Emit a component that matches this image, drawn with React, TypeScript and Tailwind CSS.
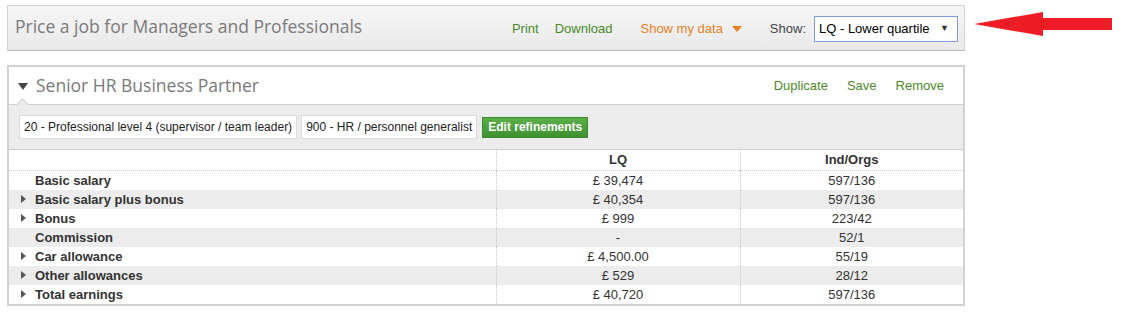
import React from 'react';

interface Row {
    label: string;
    value: string;
    counts: string;
    expandable: boolean;
}

const rows: Row[] = [
    { label: 'Basic salary', value: '£ 39,474', counts: '597/136', expandable: false },
    { label: 'Basic salary plus bonus', value: '£ 40,354', counts: '597/136', expandable: true },
    { label: 'Bonus', value: '£ 999', counts: '223/42', expandable: true },
    { label: 'Commission', value: '-', counts: '52/1', expandable: false },
    { label: 'Car allowance', value: '£ 4,500.00', counts: '55/19', expandable: true },
    { label: 'Other allowances', value: '£ 529', counts: '28/12', expandable: true },
    { label: 'Total earnings', value: '£ 40,720', counts: '597/136', expandable: true },
];

const Arrow: React.FC = () => (
    <svg width="140" height="26" viewBox="0 0 140 26" className="ml-[9px] mt-[12px]">
        <polygon points="0,12 69,0 69,6 138,6 138,18 69,18 69,24" fill="#ee1c25" />
    </svg>
);

const App: React.FC = () => {
    return (
        <div className="w-[1129px] h-[312px] bg-white font-['Liberation_Sans',Arial,sans-serif] text-[13px] text-[#333]">
            {/* Page header bar */}
            <div className="flex items-start">
                <div className="ml-[7px] mt-[5px] w-[958px] h-[46px] border border-[#d4d4d4] border-b-[#b9b9b9] bg-gradient-to-b from-[#f6f6f6] to-[#e9e9e9] flex items-center pl-[7px] pr-[6px]">
                    <h1 className="font-['Open_Sans',sans-serif] text-[17.5px] text-[#7a7a7a] -mt-[3px]">
                        Price a job for Managers and Professionals
                    </h1>
                    <div className="ml-auto flex items-center mt-[2px]">
                        <a className="text-[#4a8a26] mr-[16px]">Print</a>
                        <a className="text-[#4a8a26] mr-[28px]">Download</a>
                        <a className="text-[#e8801e] flex items-center mr-[28px]">
                            Show my data
                            <span className="ml-[9px] w-0 h-0 border-l-[5px] border-r-[5px] border-t-[6px] border-l-transparent border-r-transparent border-t-[#e8801e]" />
                        </a>
                        <span className="text-[#444] mr-[8px]">Show:</span>
                        <div className="w-[144px] h-[26px] border border-[#7d9de4] bg-white flex items-center pl-[4px] pr-[8px] text-black">
                            LQ - Lower quartile
                            <span className="ml-auto text-[9px] text-[#333]">▼</span>
                        </div>
                    </div>
                </div>
                <Arrow />
            </div>

            {/* Job card */}
            <div className="ml-[7px] mt-[14px] w-[958px] border-2 border-[#d2d2d2]">
                <div className="h-[37px] bg-white flex items-center pl-[9px] pr-[19px]">
                    <span className="w-0 h-0 border-l-[5px] border-r-[5px] border-t-[7px] border-l-transparent border-r-transparent border-t-[#444] mt-[1px]" />
                    <h2 className="ml-[8px] font-['Open_Sans',sans-serif] text-[17.5px] text-[#7a7a7a] -mt-[1px]">
                        Senior HR Business Partner
                    </h2>
                    <div className="ml-auto flex gap-[19px] text-[#4a8a26]">
                        <a>Duplicate</a>
                        <a>Save</a>
                        <a>Remove</a>
                    </div>
                </div>
                <div className="relative h-[46px] bg-[#ececec] border-t border-b border-[#d0d0d0] flex items-center gap-[4px] pl-[10px] text-[12px]">
                    <span className="absolute left-[9px] -top-[5px] w-[9px] h-[9px] rotate-45 bg-[#ececec] border-l border-t border-[#d0d0d0]" />
                    <div className="h-[24px] bg-white border border-[#dcdcdc] flex items-center px-[4px] text-[#222]">
                        20 - Professional level 4 (supervisor / team leader)
                    </div>
                    <div className="h-[24px] bg-white border border-[#dcdcdc] flex items-center px-[4px] text-[#222]">
                        900 - HR / personnel generalist
                    </div>
                    <button className="ml-[1px] h-[21px] px-[5px] bg-gradient-to-b from-[#5cae4a] to-[#3f9130] text-white font-bold text-[12px] border border-[#3b8a2d]">
                        Edit refinements
                    </button>
                </div>
                <table className="w-full border-collapse table-fixed leading-[19px]">
                    <colgroup>
                        <col className="w-[487px]" />
                        <col className="w-[244px]" />
                        <col className="w-[223px]" />
                    </colgroup>
                    <thead>
                        <tr className="border-b border-dotted border-[#c8c8c8]">
                            <th className="p-0 h-[20px]" />
                            <th className="p-0 h-[20px] font-bold text-center border-l border-dotted border-[#c8c8c8]">LQ</th>
                            <th className="p-0 h-[20px] font-bold text-center border-l border-dotted border-[#c8c8c8]">Ind/Orgs</th>
                        </tr>
                    </thead>
                    <tbody>
                        {rows.map((row, i) => (
                            <tr key={row.label} className={i % 2 === 1 ? 'bg-[#ececec]' : 'bg-white'}>
                                <td className="p-0 h-[19px]">
                                    <div className="flex items-center h-[19px] font-bold">
                                        <span className="w-[26px] flex justify-start pl-[12px]">
                                            {row.expandable && (
                                                <span className="w-0 h-0 border-t-[4px] border-b-[4px] border-l-[5px] border-t-transparent border-b-transparent border-l-[#555]" />
                                            )}
                                        </span>
                                        {row.label}
                                    </div>
                                </td>
                                <td className="p-0 h-[19px] text-center border-l border-dotted border-[#c8c8c8]">{row.value}</td>
                                <td className="p-0 h-[19px] text-center border-l border-dotted border-[#c8c8c8]">{row.counts}</td>
                            </tr>
                        ))}
                    </tbody>
                </table>
            </div>
        </div>
    );
};

export default App;
